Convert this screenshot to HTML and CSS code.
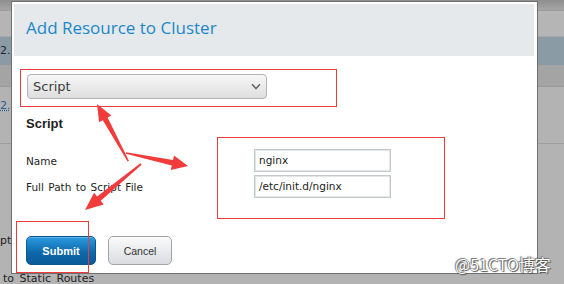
FILE: index.html
```html
<!DOCTYPE html>
<html>
<head>
<meta charset="utf-8">
<link rel="stylesheet" href="styles.css">
</head>
<body>
<div class="page">
  <div class="bg-row bg-top"></div>
  <div class="bg-row bg-r2"></div>
  <div class="bg-row bg-sel"><span class="bg-text">2.</span></div>
  <div class="bg-row bg-r4"></div>
  <div class="bg-row bg-r5"><span class="bg-link">2.</span></div>
  <div class="bg-row bg-rest">
    <span class="bg-pt">pt</span>
    <span class="bg-static">to Static Routes</span>
  </div>
</div>

<div class="dialog">
  <div class="dialog-header">
    <h1 class="dialog-title">Add Resource to Cluster</h1>
  </div>
  <div class="dialog-body">
    <div class="select">
      <span class="select-value">Script</span>
      <svg class="select-chevron" width="10" height="7" viewBox="0 0 10 7"><path d="M1 1.2 L5 5.5 L9 1.2" fill="none" stroke="#6b6b6b" stroke-width="1.6"/></svg>
    </div>
    <h2 class="section-title">Script</h2>
    <div class="form-grid">
      <label class="field-label">Name</label>
      <div class="field-input">nginx</div>
      <label class="field-label">Full Path to Script File</label>
      <div class="field-input">/etc/init.d/nginx</div>
    </div>
    <div class="actions">
      <button class="btn btn-primary">Submit</button>
      <button class="btn btn-default">Cancel</button>
    </div>
  </div>
</div>

<svg class="annotations" width="564" height="284" viewBox="0 0 564 284">
  <g fill="none" stroke="#ef3a3a" stroke-width="1">
    <rect x="20.5" y="69.5" width="316" height="37"/>
    <rect x="217.5" y="137.5" width="227" height="81"/>
    <rect x="16.5" y="221.5" width="72" height="51"/>
  </g>
  <g fill="#f23b3b">
    <polygon points="97,104 111.3,115.5 107.6,117.6 129,161 127.6,161.6 102.8,120.2 99.1,122.3"/>
    <polygon points="188,166 170.8,170.0 171.8,165.4 125.9,153.8 126.1,152.2 173.0,160.0 174.0,155.4"/>
    <polygon points="85,210 103.7,204.4 100.7,200.8 141.6,164.7 140.4,163.3 97.1,196.4 94.1,192.8"/>
  </g>
</svg>

<div class="watermark">@51CTO博客</div>
</body>
</html>
```

FILE: styles.css
```css
* { box-sizing: border-box; }
html, body {
  margin: 0;
  padding: 0;
  width: 564px;
  height: 284px;
  overflow: hidden;
  background: #b3b3b3;
  font-family: "DejaVu Sans", sans-serif;
}

.page {
  display: flex;
  flex-direction: column;
  width: 564px;
  height: 284px;
}
.bg-row { flex: none; position: relative; font-size: 11px; color: #222; }
.bg-top { height: 11px; background: linear-gradient(#8e8e8e, #a6a6a6); border-bottom: 1px solid #9a9a9a; }
.bg-r2 { height: 26px; background: #b5b5b5; border-bottom: 1px solid #a8a8a8; }
.bg-sel { height: 28px; background: #8b9ba5; padding-top: 7px; }
.bg-text { display: block; margin-left: 0; font-size: 11px; color: #1c2a33; }
.bg-r4 { height: 22px; background: #a4a4a4; border-bottom: 1px solid #999; }
.bg-r5 { height: 57px; background: #b3b3b3; border-bottom: 1px solid #9d9d9d; padding-top: 12px; }
.bg-link { display: block; margin-left: 0; font-size: 11px; color: #1d5b98; text-decoration: underline dotted; }
.bg-rest { flex: 1; background: #b3b3b3; display: flex; flex-direction: column; }
.bg-pt { margin-top: 90px; margin-left: 0; font-size: 11px; }
.bg-static { margin-top: 25px; margin-left: 3px; font-size: 11px; word-spacing: 2px; }

.dialog {
  position: absolute;
  left: 11px;
  top: 1px;
  width: 527px;
  height: 273px;
  border: 1px solid #6f6f6f;
  background: #fff;
  padding: 2px 3px 0 2px;
  display: flex;
  flex-direction: column;
}
.dialog-header {
  height: 52px;
  background: #e5e9ec;
  padding: 12px 0 0 12px;
}
.dialog-title {
  margin: 0;
  font-family: "Open Sans", sans-serif;
  font-weight: normal;
  font-size: 17px;
  line-height: 24px;
  color: #1a88c8;
}
.dialog-body {
  padding: 18px 0 0 12px;
  display: flex;
  flex-direction: column;
  align-items: flex-start;
}
.select {
  margin-left: 1px;
  width: 240px;
  height: 25px;
  border: 1px solid #b3b3b3;
  border-radius: 4px;
  background: linear-gradient(#f7f7f7, #dedede);
  display: flex;
  align-items: center;
  justify-content: space-between;
  padding: 0 5px 1px 5px;
}
.select-value { font-size: 13px; color: #3d3d3d; }
.select-chevron { margin-top: 1px; }

.section-title {
  margin: 17px 0 0 0;
  font-family: "Liberation Sans", sans-serif;
  font-weight: bold;
  font-size: 13px;
  line-height: 16px;
  color: #222;
}
.form-grid {
  margin-top: 17px;
  display: grid;
  grid-template-columns: 228px 137px;
  grid-auto-rows: 23px;
  row-gap: 3px;
  align-items: center;
}
.field-label { font-size: 10.5px; color: #1e1e1e; word-spacing: 1px; padding-top: 1px; }
.field-input {
  height: 23px;
  border: 1px solid #c4c9ce;
  box-shadow: inset 0 0 0 1px #e3e6e9;
  font-size: 10.5px;
  color: #222;
  padding: 4px 0 0 4px;
}
.actions {
  margin-top: 38px;
  display: flex;
  gap: 12px;
}
.btn {
  height: 29px;
  border-radius: 5px;
  font-family: "Liberation Sans", sans-serif;
  padding: 0;
  margin: 0;
}
.btn-primary {
  width: 70px;
  border: 1px solid #0b568f;
  background: linear-gradient(#2a9be0, #0c66a8 60%, #0a5b98);
  color: #fff;
  font-weight: bold;
  font-size: 11px;
  box-shadow: inset 0 1px 0 rgba(255,255,255,0.25);
}
.btn-default {
  width: 64px;
  border: 1px solid #a3a3a3;
  background: linear-gradient(#fbfbfb, #e8eaec 55%, #d9dcdf);
  color: #333;
  font-size: 10.5px;
}

.annotations {
  position: absolute;
  left: 0;
  top: 0;
}
.watermark {
  position: absolute;
  left: 455px;
  top: 254px;
  font-family: "Noto Sans CJK SC", sans-serif;
  font-size: 16px;
  line-height: 20px;
  color: #fff;
  text-shadow: 0 0 1px #444, 1px 1px 1px #555, -1px -1px 1px #777;
}
```
